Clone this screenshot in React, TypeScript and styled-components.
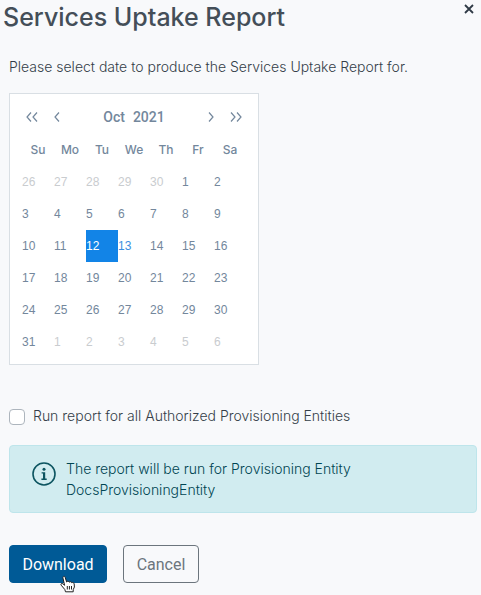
import React, { useState } from "react";
import styled, { createGlobalStyle } from "styled-components";

const GlobalStyle = createGlobalStyle`
  *, *::before, *::after { box-sizing: border-box; }
  html { background: #f8f9fb; }
  body {
    margin: 0;
    color: #343e48;
    font-family: Inter, "Liberation Sans", sans-serif;
    font-size: 14px;
    font-weight: 300;
    line-height: 21px;
  }
`;

const Dialog = styled.main`
  padding: 0 4px 12px 9px;
`;

const Header = styled.header`
  display: flex;
  justify-content: space-between;
  align-items: flex-start;
  margin: 0 0 22px -6px;
`;

const Title = styled.h1`
  margin: 0;
  color: #444e58;
  font-size: 25px;
  line-height: 34px;
  font-weight: 500;
`;

const CloseButton = styled.button`
  display: flex;
  padding: 4px 3px;
  border: 0;
  background: none;
  color: #2f3a45;
  cursor: pointer;
`;

const Prompt = styled.p`
  margin: 0 0 16px;
`;

const Calendar = styled.section`
  width: fit-content;
  margin-bottom: 40px;
  padding: 6px 12px;
  border: 1px solid #d9dfe4;
  background: #fff;
  color: #73879c;
  font-family: "Liberation Sans", Arial, sans-serif;
  font-weight: 400;
`;

const CalendarBar = styled.div`
  display: flex;
  align-items: center;
  justify-content: space-between;
  height: 34px;
  padding: 0 4px;
`;

const NavGroup = styled.div`
  display: flex;
  gap: 16px;
`;

const NavButton = styled.button`
  display: flex;
  padding: 0;
  border: 0;
  background: none;
  color: inherit;
  cursor: pointer;
`;

const MonthLabel = styled.div`
  display: flex;
  gap: 8px;
  font-family: Roboto, sans-serif;
  font-size: 14px;
  font-weight: 500;
`;

const Grid = styled.table`
  border-collapse: collapse;
  table-layout: fixed;
  width: 224px;
  font-size: 12px;
`;

const Weekday = styled.th`
  width: 32px;
  height: 32px;
  padding: 0 0 2px;
  font-family: Inter, sans-serif;
  font-weight: 500;
`;

const DayCell = styled.td`
  width: 32px;
  height: 32px;
  padding: 0;
`;

type DayKind = "normal" | "outside" | "today" | "selected";

const dayColor: Record<DayKind, string> = {
  normal: "#73879c",
  outside: "#c9cccf",
  today: "#3d8fe0",
  selected: "#ffffff",
};

const DayButton = styled.button<{ $kind: DayKind }>`
  display: block;
  width: 100%;
  height: 32px;
  padding: 0;
  border: 0;
  background: ${(p) => (p.$kind === "selected" ? "#1284e7" : "transparent")};
  color: ${(p) => dayColor[p.$kind]};
  font: inherit;
  text-align: left;
  cursor: pointer;
`;

const CheckLabel = styled.label`
  display: flex;
  align-items: center;
  gap: 8px;
  margin-bottom: 18px;
`;

const Checkbox = styled.input`
  appearance: none;
  width: 16px;
  height: 16px;
  margin: 3px 0 0;
  border: 1px solid #adb5bd;
  border-radius: 4px;
  background: #fff;
  &:checked { background: #005c99; }
`;

const Notice = styled.div`
  display: flex;
  gap: 10px;
  margin-top: 19px;
  margin-bottom: 32px;
  padding: 12px 22px;
  border: 1px solid #bee5eb;
  border-radius: 4px;
  background: #d1ecf0;
  color: #004552;
`;

const NoticeIcon = styled.svg`
  flex: none;
  margin-top: 4px;
  color: #0c5460;
`;

const NoticeText = styled.p`
  margin: 0;
`;

const Actions = styled.div`
  display: flex;
  gap: 16px;
`;

const ActionButton = styled.button<{ $primary?: boolean }>`
  position: relative;
  min-width: ${(p) => (p.$primary ? "98px" : "76px")};
  height: 38px;
  padding: 2px 12px 0;
  border: 1px solid ${(p) => (p.$primary ? "#005a96" : "#6c757d")};
  border-radius: 4px;
  background: ${(p) => (p.$primary ? "#005a96" : "transparent")};
  color: ${(p) => (p.$primary ? "#fff" : "#6c757d")};
  font-family: Roboto, sans-serif;
  font-size: 16px;
  line-height: 24px;
  cursor: pointer;
`;

const Pointer = styled.svg`
  position: absolute;
  left: 50px;
  top: 29px;
`;

const weekdays = ["Su", "Mo", "Tu", "We", "Th", "Fr", "Sa"];
const firstShown = Date.UTC(2021, 8, 26);
const dayLength = 86400000;
const weeks = Array.from({ length: 6 }, (_, w) =>
  Array.from({ length: 7 }, (_, d) => new Date(firstShown + (w * 7 + d) * dayLength))
);

function Chevrons({ double, right }: { double?: boolean; right?: boolean }) {
  const width = double ? 12 : 6;
  const d = right
    ? double ? "M1 .5 5 5 1 9.500M7 .5 11 5 7 9.500" : "M1 .5 5 5 1 9.500"
    : double ? "M5 .5 1 5 5 9.500M11 .5 7 5 11 9.500" : "M5 .5 1 5 5 9.500";
  return (
    <svg width={width} height="10" viewBox={`0 0 ${width} 10`} fill="none" stroke="currentColor" strokeWidth="1.2" aria-hidden="true">
      <path d={d} />
    </svg>
  );
}

export default function App() {
  const [selected, setSelected] = useState(Date.UTC(2021, 9, 12));
  const [all, setAll] = useState(false);

  const kindOf = (date: Date): DayKind => {
    if (date.getTime() === selected) return "selected";
    if (date.getUTCMonth() !== 9) return "outside";
    return date.getUTCDate() === 13 ? "today" : "normal";
  };

  return (
    <>
      <GlobalStyle />
      <Dialog>
        <Header>
          <Title>Services Uptake Report</Title>
          <CloseButton aria-label="Close">
            <svg width="10" height="10" viewBox="0 0 10 10" stroke="currentColor" strokeWidth="1.8" aria-hidden="true">
              <path d="M1 1 9 9M9 1 1 9" />
            </svg>
          </CloseButton>
        </Header>
        <Prompt>Please select date to produce the Services Uptake Report for.</Prompt>

        <Calendar aria-label="Report date">
          <CalendarBar>
            <NavGroup>
              <NavButton aria-label="Previous year"><Chevrons double /></NavButton>
              <NavButton aria-label="Previous month"><Chevrons /></NavButton>
            </NavGroup>
            <MonthLabel><span>Oct</span><span>2021</span></MonthLabel>
            <NavGroup>
              <NavButton aria-label="Next month"><Chevrons right /></NavButton>
              <NavButton aria-label="Next year"><Chevrons double right /></NavButton>
            </NavGroup>
          </CalendarBar>
          <Grid>
            <thead>
              <tr>{weekdays.map((name) => <Weekday key={name} scope="col">{name}</Weekday>)}</tr>
            </thead>
            <tbody>
              {weeks.map((week, i) => (
                <tr key={i}>
                  {week.map((date) => (
                    <DayCell key={date.getTime()}>
                      <DayButton $kind={kindOf(date)} onClick={() => setSelected(date.getTime())}>
                        {date.getUTCDate()}
                      </DayButton>
                    </DayCell>
                  ))}
                </tr>
              ))}
            </tbody>
          </Grid>
        </Calendar>

        <CheckLabel>
          <Checkbox type="checkbox" checked={all} onChange={(e) => setAll(e.target.checked)} />
          Run report for all Authorized Provisioning Entities
        </CheckLabel>

        <Notice role="status">
          <NoticeIcon width="24" height="24" viewBox="0 0 24 24" aria-hidden="true">
            <circle cx="12" cy="12" r="11" fill="none" stroke="currentColor" strokeWidth="1.6" />
            <circle cx="12" cy="7.200" r="1.500" fill="currentColor" />
            <path d="M9.600 10.200H13.200V16.600H14.700V18H9.400V16.600H11V11.500H9.600Z" fill="currentColor" />
          </NoticeIcon>
          <NoticeText>
            The report will be run for Provisioning Entity
            <br />
            DocsProvisioningEntity
          </NoticeText>
        </Notice>

        <Actions>
          <ActionButton $primary>
            Download
            <Pointer width="16" height="18" viewBox="0 0 16 18" aria-hidden="true">
              <path
                d="M5.500 16.800 4.800 14.500 1.200 10.200C.3 8.800 1.800 7.900 2.900 8.800L4.600 10.300 3 3.200C2.500 1.200 4.600.6 5.200 2.400L6.600 7C7.400 5.900 8.700 6.200 9.200 7.200 10.200 6.300 11.300 6.700 11.700 7.700 12.900 7 14 7.700 14.200 9L14.400 12 13.200 14.700V16.800Z"
                fill="#fff"
                stroke="#222"
                strokeLinejoin="round"
              />
              <path d="M7.300 11V14.500M9.400 11V14.500M11.500 11V14.500" stroke="#222" fill="none" />
            </Pointer>
          </ActionButton>
          <ActionButton>Cancel</ActionButton>
        </Actions>
      </Dialog>
    </>
  );
}
